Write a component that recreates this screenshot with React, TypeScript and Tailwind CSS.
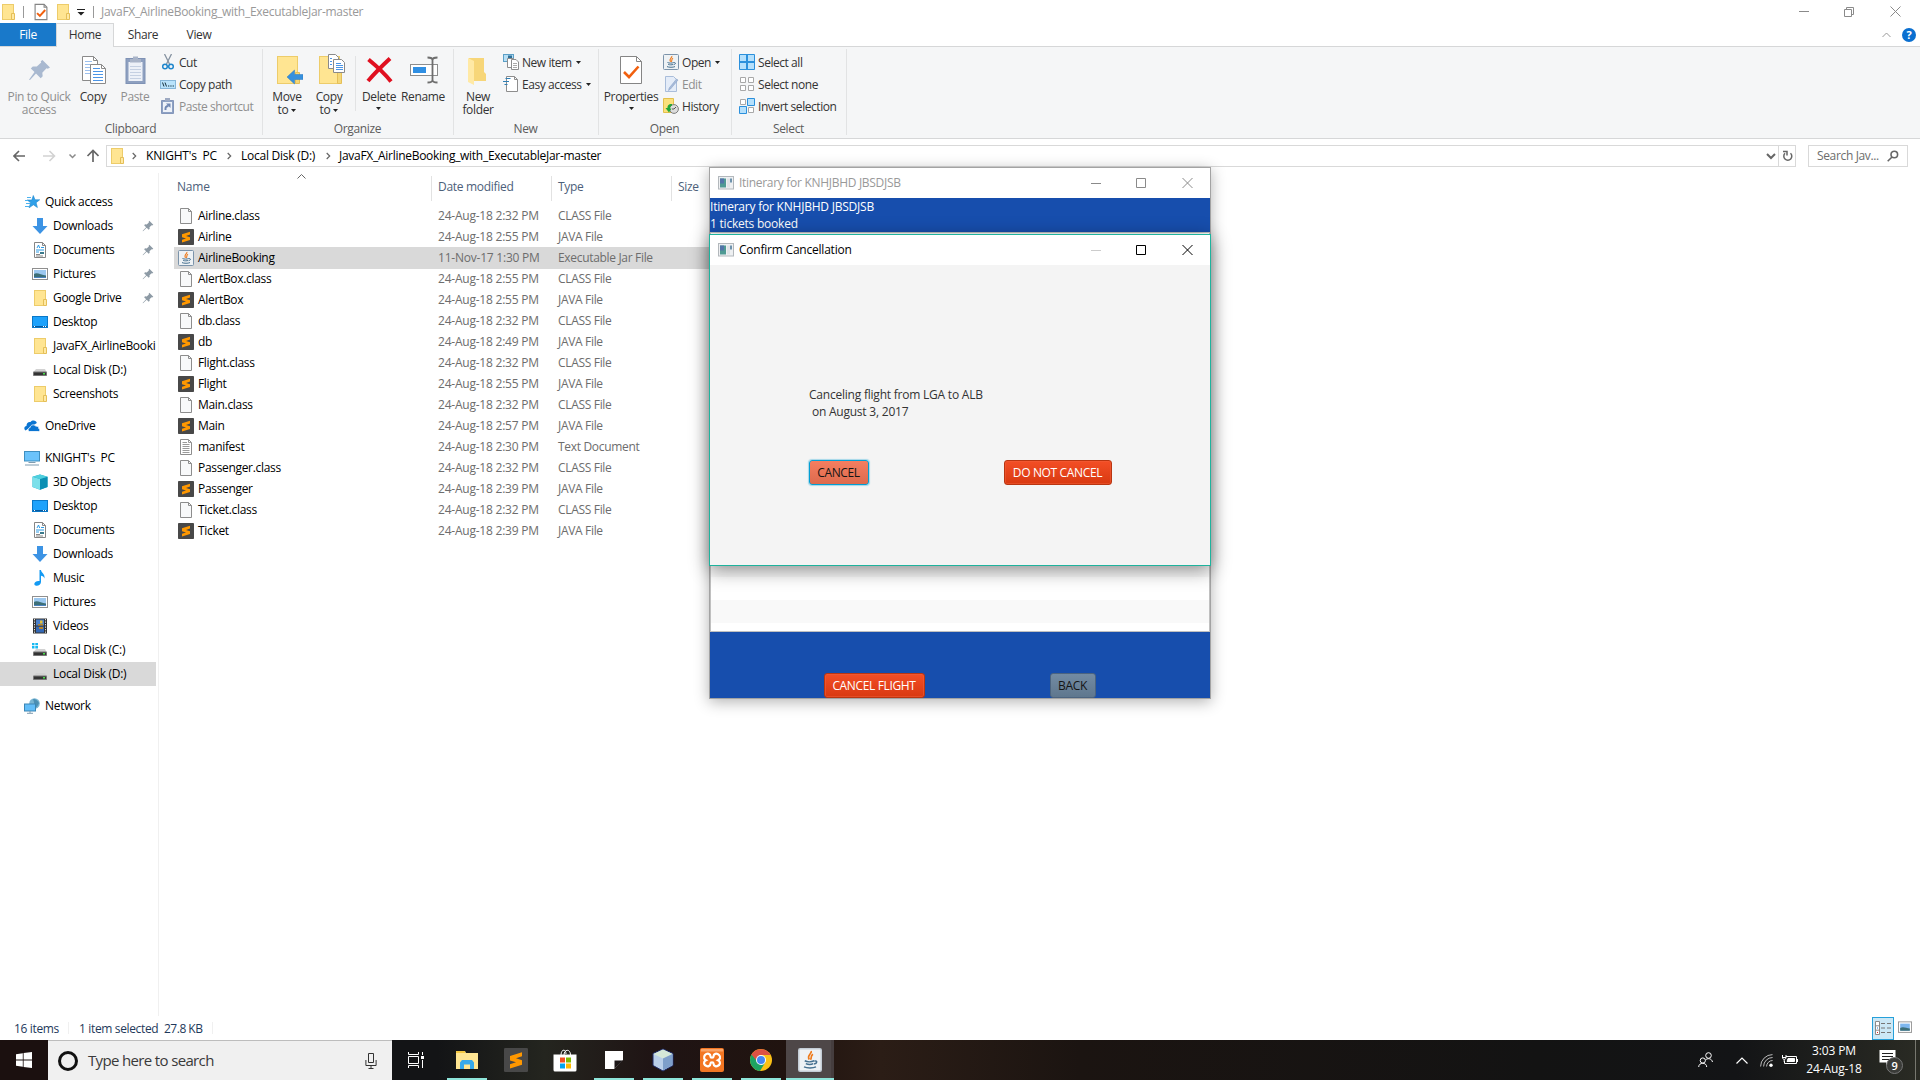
import React from "react";

type IconProps = { className?: string };

const Svg = ({ size = 16, box, className = "", children }: { size?: number; box?: string; className?: string; children: React.ReactNode }) => (
  <svg width={size} height={size} viewBox={box ?? `0 0 ${size} ${size}`} className={`shrink-0 ${className}`} fill="none">
    {children}
  </svg>
);

/* ---------- small icons ---------- */
const Folder = ({ className }: IconProps) => (
  <Svg className={className}>
    <rect x="2.5" y=".5" width="11" height="15" fill="#ffe592" stroke="#edcc6a" />
    <path d="M11.5 9.5h3v6h-3z" fill="#ffe9a3" stroke="#e5bf58" />
  </Svg>
);
const BlankFile = () => (
  <Svg>
    <path d="M2.500.5h8l3 3v12h-11z" fill="#f8f9fa" stroke="#8d8d8d" />
    <path d="M10.500.5v3h3" stroke="#8d8d8d" />
  </Svg>
);
const TextFile = () => (
  <Svg>
    <path d="M2.500.5h8l3 3v12h-11z" fill="#fff" stroke="#8d8d8d" />
    <path d="M10.500.5v3h3M4.500 3.500H9M4.500 5.500h7M4.500 7.500h7M4.500 9.500h7M4.500 11.500h7M4.500 13.500h7" stroke="#9a9a9a" />
  </Svg>
);
const SublimeFile = ({ size = 16 }: { size?: number }) => (
  <Svg size={size} box="0 0 16 16">
    <rect width="16" height="16" rx=".8" fill="#484848" />
    <path d="M12 2.800v2.700L8 6.900l4 1.300v2.900l-8 2.500v-2.800l4-1.300-4-1.200V5.300z" fill="#ff9800" />
  </Svg>
);
const JavaFile = ({ size = 16 }: { size?: number }) => (
  <Svg size={size} box="0 0 16 16">
    <rect x=".5" y=".5" width="15" height="15" rx="1" fill="#eef2f5" stroke={size > 16 ? "#c3ccd6" : "#7b93aa"} />
    <path d="M8.800 2c.8 1.800-3.300 2.600-1.300 5.700M10 4.200C8 5.300 9.500 6.300 8.300 7.800" stroke="#ee7a1b" strokeWidth="1.100" />
    <path d="M4.500 8.500c1.500.8 4.500.8 6.300 0M5.200 10.400c1.500.6 3.700.6 5 0M4 12.600c2 .9 6 .9 8 0M11 8.700c2.200-.4 1.800 1.600-.3 2" stroke="#46708f" />
  </Svg>
);
const QuickStar = () => (
  <Svg>
    <path d="M9.300 1.500l1.700 4.300h4.700l-3.600 2.900 1.300 4.800-4-2.700-4.300 3 1.500-5L3.300 6h4.500z" fill="#2f9fe8" stroke="#1b86cf" strokeWidth=".6" />
    <path d="M3 3.500h4M1 6.500h3M2 9.500h4M1 12.500h4" stroke="#4db2ee" />
  </Svg>
);
const DownArrow = () => (
  <Svg>
    <path d="M5 0h6v8h4.500L8 16 .5 8H5z" fill="#3c93e4" />
  </Svg>
);
const DocIcon = () => (
  <Svg>
    <path d="M2.500.5h8l3 3v12h-11z" fill="#fff" stroke="#858585" />
    <path d="M10.500.5v3h3M4 12.500h4M4 14h7" stroke="#888" />
    <path d="M5 6l1.500-3 1.200 3M9 5.500h3M4 8h8M4 10h3" stroke="#2d9be6" />
    <path d="M8 10h4v2H8z" fill="#3a7a8b" />
  </Svg>
);
const PicIcon = () => (
  <Svg>
    <rect x=".5" y="2.500" width="15" height="11" fill="#fff" stroke="#8f8f8f" />
    <rect x="2" y="4" width="12" height="8" fill="#9cc8f0" />
    <path d="M2 8c3-2 7 1 12 1.500V12H2z" fill="#3d6f78" />
    <path d="M2 11h12v1H2z" fill="#4a82c0" />
  </Svg>
);
const DesktopIcon = () => (
  <Svg>
    <rect x=".5" y="2.500" width="15" height="11" fill="#1ea2fb" stroke="#0a78c8" />
    <path d="M1 12.500h14" stroke="#08599d" />
    <path d="M2 12.500h1M11 12.500h1M13 12.500h1" stroke="#fff" />
  </Svg>
);
const DiskIcon = ({ win = false }: { win?: boolean }) => (
  <Svg>
    {win && <path d="M0 1h2.500v2.300H0zM3.300 1H6v2.300H3.300zM0 4h2.500v2.500H0zM3.300 4H6v2.500H3.300z" fill="#18b9f2" />}
    <path d="M4 7h9l1.500 3h-13z" fill="#d2d2d2" />
    <rect x="1" y="9.500" width="14" height="4.500" rx=".8" fill="#777" />
    <rect x="2" y="10.500" width="12" height="2.500" fill="#333" />
    <path d="M11 11.800h2" stroke="#48e048" strokeWidth="1.500" />
  </Svg>
);
const OneDriveIcon = () => (
  <Svg>
    <path d="M1.500 12.500C-.6 11 .3 8.200 2.500 8 2.300 5.500 4.200 3.500 6.500 4c2-2.700 6-1.500 6.300 1" fill="#0a74d1" />
    <path d="M5.500 13.500c-2-.5-1.800-3.600.5-3.800.3-2.800 4.200-4 5.700-1.500 2-.6 3.300.8 3 2.300 1.800.4 1.600 3-.2 3z" fill="#0a74d1" stroke="#fff" strokeWidth=".8" />
  </Svg>
);
const PcIcon = () => (
  <Svg>
    <rect x=".5" y="1.500" width="15" height="9.500" fill="#6bc3fb" stroke="#3f8fc0" />
    <path d="M4.500 12.500h7M1 15h14" stroke="#7f9cb0" />
  </Svg>
);
const CubeIcon = () => (
  <Svg>
    <path d="M8 .5l7.500 2.300V13L8 15.700.5 13V2.800z" fill="#1fa9c7" />
    <path d="M8 5l7.500-2.200V13L8 15.700z" fill="#0b8fb3" />
    <path d="M.5 2.800L8 5v10.700L.5 13z" fill="#7be0ea" />
    <path d="M8 .5l7.500 2.300L8 5 .5 2.800z" fill="#4fd0de" />
  </Svg>
);
const MusicIcon = () => (
  <Svg>
    <path d="M7.500 0h1.500c.3 3 4.500 4 3.300 8.500C12 6.500 10.500 6 9 5.700V12c0 3-3.500 4.500-5.500 3.600C1 14.500 2.500 10.500 7.500 11z" fill="#139af3" />
  </Svg>
);
const VideoIcon = () => (
  <Svg>
    <rect x="1" y=".5" width="14" height="15" fill="#333" />
    <path d="M2.500 1v14M13.500 1v14" stroke="#ddd" strokeDasharray="1.300 1.200" />
    <rect x="4" y="1.500" width="8" height="6" fill="#4a7fc8" />
    <rect x="4" y="8.500" width="8" height="6" fill="#3468b5" />
    <path d="M6 6h5v1.500H6zM7 9h4v2H7z" fill="#b8862b" />
    <path d="M8 2.500h2.500v3H8z" fill="#e5c13a" />
  </Svg>
);
const NetworkIcon = () => (
  <Svg>
    <circle cx="10.500" cy="5.500" r="5.300" fill="#79b5d3" />
    <path d="M9 1c3 0 5 2 6 4-1 3-3 5-5 5 1-3 0-6-1-9z" fill="#4b8fb3" />
    <rect x=".5" y="6" width="11" height="7" fill="#62bdf8" stroke="#3a86b5" />
    <path d="M3 15.300h6M6 13v2" stroke="#7f9cb0" />
  </Svg>
);
const PinSmall = () => (
  <svg width="12" height="12" viewBox="0 0 12 12" className="shrink-0" fill="#8d9aa5">
    <path d="M7.300.8l4 4-1.200.7-.5-.3L7.500 7.300l.2 1.500-1 .9-2-2L1 11.300.6 11l3.500-3.700-2-2 1-1 1.600.2L6.900 2.400l-.3-.5z" />
  </svg>
);
const AppIcon = () => (
  <svg width="16" height="14" viewBox="0 0 16 14" className="shrink-0">
    <rect x=".5" y=".5" width="15" height="12.500" fill="#eef0f2" stroke="#b3b8bc" />
    <rect x="2" y="2.500" width="6" height="9" fill="#4f9a93" />
    <rect x="2" y="2.500" width="4" height="5" fill="#5274a8" />
    <rect x="9" y="2.500" width="3" height="9" fill="#e0e3e6" />
    <rect x="12" y="2.500" width="2" height="4" fill="#6f93ad" />
  </svg>
);

/* ---------- ribbon small icons ---------- */
const CutIcon = () => (
  <Svg>
    <path d="M4.500 0l5 10M11.500 0l-5 10" stroke="#8592a0" strokeWidth="1.300" />
    <circle cx="5" cy="12.500" r="2.300" stroke="#1f87cc" strokeWidth="1.500" />
    <circle cx="11" cy="12.500" r="2.300" stroke="#1f87cc" strokeWidth="1.500" />
  </Svg>
);
const CopyPathIcon = () => (
  <Svg>
    <rect x=".5" y="4.500" width="15" height="8" fill="#b9e3fb" stroke="#86b6d8" />
    <path d="M2.500 6.500l1.500 4M5 6.500l1.500 4" stroke="#16323f" />
    <path d="M8 10h1.300M10.300 10h1.300M12.600 10h1.300" stroke="#16323f" strokeWidth="1.200" />
  </Svg>
);
const PasteShortcutIcon = () => (
  <Svg>
    <path d="M1.500 2.500h12v13h-12z" fill="#8ea2c4" stroke="#8496ba" />
    <rect x="5" y="0" width="5" height="3" fill="#9eaac2" />
    <rect x="3" y="4" width="9" height="10" fill="#eef2f9" />
    <path d="M5.500 12c-.3-3 .7-4 3-4" stroke="#7188b3" strokeWidth="2" />
    <path d="M6 5.500h4.500V10z" fill="#7188b3" />
  </Svg>
);
const NewItemIcon = () => (
  <Svg>
    <rect x=".5" y=".5" width="10" height="7" fill="#b7dff5" stroke="#5b9fc6" />
    <rect x="5" y="1.500" width="4" height="3" fill="#2d6f98" />
    <path d="M4.500 4.500h6v9h-6z" fill="#fff" stroke="#8d8d8d" />
    <path d="M8.500 5.500h4.500l2.500 2.500v7.500h-7z" fill="#fff" stroke="#8d8d8d" />
    <path d="M10 9.500h4M10 11.500h4M10 13.500h4" stroke="#aaa" />
  </Svg>
);
const EasyAccessIcon = () => (
  <Svg>
    <path d="M3.500.5h8l3 3v12h-11z" fill="#fff" stroke="#8d8d8d" />
    <path d="M11.500.5v3h3" stroke="#8d8d8d" />
    <path d="M2.500 2.500h5M0 5.500h6M1.500 8.500h3" stroke="#2f7fb5" strokeWidth="1.200" />
  </Svg>
);
const EditIcon = () => (
  <Svg>
    <path d="M2.500.5h8l3 3v12h-11z" fill="#e4ecf8" stroke="#a9bdda" />
    <path d="M15 4L7.500 13l-2 1.500.7-2.500L13.500 3z" fill="#a8bbd9" stroke="#8ba4ca" strokeWidth=".6" />
  </Svg>
);
const HistoryIcon = () => (
  <Svg>
    <path d="M.5.500h10v14H.5z" fill="#fbe07b" stroke="#e3c04c" />
    <circle cx="11" cy="11" r="4.400" fill="#dcdcdc" stroke="#7d7d7d" />
    <path d="M11 11l2-2M11 11h-2" stroke="#555" />
    <path d="M9 6C5 6 4.500 8 4.500 10H2.500L6 14.500 8.500 10.500H7c0-1.500.5-2.500 2-3z" fill="#23a638" />
  </Svg>
);
const SelectAllIcon = () => (
  <Svg>
    <path d="M.5.5h7v7h-7zM8.500.5h7v7h-7zM.5 8.500h7v7h-7zM8.500 8.500h7v7h-7z" fill="#b5e0fc" stroke="#2b90dc" />
    <path d="M8 0v16M0 8h16" stroke="#2b90dc" strokeWidth="2" />
  </Svg>
);
const SelectNoneIcon = () => (
  <Svg>
    <path d="M1.500 1.500h5v5h-5zM9.500 1.500h5v5h-5zM1.500 9.500h5v5h-5zM9.500 9.500h5v5h-5z" fill="#fff" stroke="#a8a8a8" />
  </Svg>
);
const InvertIcon = () => (
  <Svg>
    <path d="M1.500 1.500h5v5h-5zM9.500 9.500h5v5h-5z" fill="#fff" stroke="#a8a8a8" />
    <path d="M8.500.5h7v7h-7zM.5 8.500h7v7h-7z" fill="#b5e0fc" stroke="#2b90dc" />
  </Svg>
);

/* ---------- ribbon large icons ---------- */
const BigPin = () => (
  <Svg size={32}>
    <path d="M19.500 6l7.500 7.500-2.200 1.200-1.300-.5-4.200 4.500.4 3.600-2 2-4.700-4.700L7 26l-1-.3 5.500-7.600-3.700-3.700 2-2 4 .2 4.400-4-.5-1.400z" fill="#a9b9d0" />
  </Svg>
);
const BigCopy = () => (
  <Svg size={32}>
    <path d="M5.500 2.500h11l4 4v20h-15z" fill="#fff" stroke="#8a8a8a" />
    <path d="M16.500 2.500v4h4" stroke="#8a8a8a" />
    <path d="M8 7.500h7M8 10.500h9M8 13.500h9M8 16.500h9M8 19.500h9" stroke="#9cc0ee" />
    <path d="M13.500 10.500h11l4 4v15h-15z" fill="#fff" stroke="#8a8a8a" />
    <path d="M24.500 10.500v4h4" stroke="#8a8a8a" />
    <path d="M16 14.500h7M16 17.500h10M16 20.500h10M16 23.500h10M16 26.500h10" stroke="#4b95e6" />
  </Svg>
);
const BigPaste = () => (
  <Svg size={32}>
    <rect x="7" y="4.500" width="19" height="25" fill="#8ea0c0" stroke="#7f92b5" />
    <rect x="9.500" y="8" width="14" height="19" fill="#edf1f8" />
    <path d="M11 5h11v3.500H11zM14 2.500h5v3h-5z" fill="#a9b4c8" />
    <path d="M11 12.500h11M11 15.500h11M11 18.500h11M11 21.500h11M11 24.500h11" stroke="#c5d0e2" />
  </Svg>
);
const BigMove = () => (
  <Svg size={32}>
    <rect x="6.500" y="2.500" width="20" height="27" fill="#ffe592" stroke="#edcc6a" />
    <path d="M24.500 18.500h4v11h-4z" fill="#f5d878" stroke="#e5bf58" />
    <path d="M16 23l7.500-7v4.500H32v5h-8.500V30z" fill="#3690dd" stroke="#2b79c0" strokeWidth=".5" />
  </Svg>
);
const BigCopyTo = () => (
  <Svg size={32}>
    <rect x="6.500" y="2.500" width="20" height="27" fill="#ffe592" stroke="#edcc6a" />
    <path d="M24.500 18.500h4v11h-4z" fill="#f5d878" stroke="#e5bf58" />
    <path d="M15.500.5h7l3 3v11h-10z" fill="#fff" stroke="#8a8a8a" />
    <path d="M20.500 5.500h8l3 3v10h-11z" fill="#fff" stroke="#8a8a8a" />
    <path d="M23 9.500h5M23 11.500h7M23 13.500h7M23 15.500h7M17 4.500h2M17 7.500h2M17 10.500h2" stroke="#4b95e6" />
  </Svg>
);
const BigDelete = () => (
  <Svg size={32}>
    <path d="M5.500 5.500C11 10 22 20 28 27.500M27 4.500C20 11 11 20 5 27" stroke="#e01020" strokeWidth="4" />
  </Svg>
);
const BigRename = () => (
  <Svg size={32}>
    <rect x="3.500" y="10.500" width="27" height="11" fill="#fff" stroke="#8d8d8d" />
    <rect x="6" y="13" width="13" height="6" fill="#2f8fe3" />
    <path d="M25.500 5v23M20.500 3.500c2.500 0 5 .5 5 2.500 0-2 2.500-2.500 5-2.500M20.500 28.500c2.500 0 5-.5 5-2.500 0 2 2.500 2.500 5 2.500" stroke="#6e6e6e" strokeWidth="1.800" />
  </Svg>
);
const BigNewFolder = () => (
  <Svg size={32}>
    <path d="M7 4h15v14l2 2v7H7z" fill="#f7d679" />
    <path d="M6 4l6 3v24l-6-3z" fill="#ffe9a5" />
  </Svg>
);
const CheckDoc = ({ size = 32 }: { size?: number }) => (
  <Svg size={size} box="0 0 32 32">
    <path d="M5.500 2.500h16l5 5v22h-21z" fill="#fff" stroke="#858585" strokeWidth={size < 20 ? 2 : 1} />
    <path d="M21.500 2.500v5h5" stroke="#858585" strokeWidth={size < 20 ? 2 : 1} />
    <path d="M9 18l5 5L23.500 12.500" stroke="#f1600f" strokeWidth={size < 20 ? 3.500 : 2.600} />
  </Svg>
);

const Caret = () => (
  <svg width="5" height="3" viewBox="0 0 5 3" className="inline-block shrink-0 align-middle">
    <path d="M0 0h5L2.500 3z" fill="#222" />
  </svg>
);

/* ---------- ribbon ---------- */
const Big = ({ icon, lines, w, caret, dim }: { icon: React.ReactNode; lines: string[]; w: string; caret?: "inline" | "below"; dim?: boolean }) => (
  <div className={`flex flex-col items-center pt-[7px] ${w} ${dim ? "text-[#8f8f8f]" : "text-[#333]"}`}>
    {icon}
    <div className="mt-1 text-center leading-[13px] whitespace-nowrap">
      {lines.map((l, i) => (
        <div key={l}>
          {l}
          {caret === "inline" && i === lines.length - 1 && <span className="ml-[3px]"><Caret /></span>}
        </div>
      ))}
      {caret === "below" && <div className="-mt-[2px]"><Caret /></div>}
    </div>
  </div>
);
const Small = ({ icon, label, caret, dim }: { icon: React.ReactNode; label: string; caret?: boolean; dim?: boolean }) => (
  <div className={`flex h-[22px] items-center gap-[3px] whitespace-nowrap tracking-[-0.45px] ${dim ? "text-[#8f8f8f]" : "text-[#333]"}`}>
    {icon}
    <span className="pt-px">{label}</span>
    {caret && <span className="ml-px flex"><Caret /></span>}
  </div>
);
const Group = ({ label, w, children }: { label: string; w: string; children: React.ReactNode }) => (
  <>
    <div className={`flex flex-col ${w}`}>
      <div className="flex h-[73px]">{children}</div>
      <div className="-ml-px pt-px text-center leading-[18px] text-[#5c5c5c]">{label}</div>
    </div>
    <div className="mt-[2px] h-[86px] w-px bg-[#e2e3e4]" />
  </>
);

const Ribbon = () => (
  <div className="flex h-[92px] border-b border-[#d6d7d8] bg-[#f5f6f7]">
    <Group label="Clipboard" w="w-[262px]">
      <Big w="ml-1 w-[70px]" icon={<BigPin />} lines={["Pin to Quick", "access"]} dim />
      <Big w="w-[38px]" icon={<BigCopy />} lines={["Copy"]} />
      <Big w="w-[46px]" icon={<BigPaste />} lines={["Paste"]} dim />
      <div className="ml-[2px] pt-1">
        <Small icon={<CutIcon />} label="Cut" />
        <Small icon={<CopyPathIcon />} label="Copy path" />
        <Small icon={<PasteShortcutIcon />} label="Paste shortcut" dim />
      </div>
    </Group>
    <Group label="Organize" w="w-[190px]">
      <Big w="ml-[3px] w-[42px]" icon={<BigMove />} lines={["Move", "to"]} caret="inline" />
      <Big w="w-[42px]" icon={<BigCopyTo />} lines={["Copy", "to"]} caret="inline" />
      <div className="mt-[9px] ml-[5px] h-[55px] w-px bg-[#e2e3e4]" />
      <Big w="w-[46px]" icon={<BigDelete />} lines={["Delete"]} caret="below" />
      <Big w="w-[42px]" icon={<BigRename />} lines={["Rename"]} />
    </Group>
    <Group label="New" w="w-[144px]">
      <Big w="ml-[2px] w-[44px]" icon={<BigNewFolder />} lines={["New", "folder"]} />
      <div className="ml-[3px] pt-1">
        <Small icon={<NewItemIcon />} label="New item" caret />
        <Small icon={<EasyAccessIcon />} label="Easy access" caret />
      </div>
    </Group>
    <Group label="Open" w="w-[132px]">
      <Big w="w-[64px]" icon={<CheckDoc />} lines={["Properties"]} caret="below" />
      <div className="pt-1">
        <Small icon={<JavaFile />} label="Open" caret />
        <Small icon={<EditIcon />} label="Edit" dim />
        <Small icon={<HistoryIcon />} label="History" />
      </div>
    </Group>
    <Group label="Select" w="w-[114px]">
      <div className="ml-[7px] pt-1">
        <Small icon={<SelectAllIcon />} label="Select all" />
        <Small icon={<SelectNoneIcon />} label="Select none" />
        <Small icon={<InvertIcon />} label="Invert selection" />
      </div>
    </Group>
  </div>
);

/* ---------- top bars ---------- */
const TitleBar = () => (
  <div className="flex h-[23px] items-center pt-px">
    <Folder />
    <div className="ml-[7px] h-3 w-px bg-[#999]" />
    <div className="ml-[8px] flex"><CheckDoc size={18} /></div>
    <Folder className="ml-[5px]" />
    <svg width="8" height="7" viewBox="0 0 8 7" className="ml-[6px]">
      <path d="M0 0h8v1H0zM0.500 3h7L4 6.500z" fill="#222" />
    </svg>
    <div className="ml-[8px] h-3 w-px bg-[#999]" />
    <span className="ml-[7px] text-[#999] tracking-[-0.28px]">JavaFX_AirlineBooking_with_ExecutableJar-master</span>
    <svg width="112" height="12" viewBox="0 0 112 12" className="mr-[19px] ml-auto" fill="none" stroke="#8a8a8a">
      <path d="M10 5.500h10M101.500 .5l10 10M111.500.5l-10 10M55.500 3.500h7v7h-7zM57.500 3.500v-2h7v7h-2" />
    </svg>
  </div>
);
const Tabs = () => (
  <div className="flex h-[24px] border-b border-[#d6d7d8]">
    <div className="h-[23px] w-14 bg-[#1979ca] text-center leading-[24px] text-white">File</div>
    <div className="h-[24px] w-[58px] border border-b-0 border-[#d6d7d8] bg-[#f5f6f7] text-center leading-[22px] text-[#333]">Home</div>
    <div className="w-[58px] text-center leading-[24px] text-[#333]">Share</div>
    <div className="w-[54px] text-center leading-[24px] text-[#333]">View</div>
    <div className="mr-1 ml-auto flex items-center gap-[11px]">
      <svg width="9" height="6" viewBox="0 0 9 6" fill="none" stroke="#999"><path d="M.5 5l4-4 4 4" /></svg>
      <div className="h-[14px] w-[14px] rounded-full bg-[#0a6fd0] text-center text-[11px] leading-[14px] font-bold text-white">?</div>
    </div>
  </div>
);
const Chevron = () => (
  <svg width="5" height="8" viewBox="0 0 5 8" fill="none" stroke="#666" strokeWidth="1.200"><path d="M.7 1l3 3-3 3" /></svg>
);
const AddressBar = () => (
  <div className="flex h-[34px] items-center">
    <svg width="86" height="14" viewBox="0 0 86 14" className="ml-[13px]" fill="none">
      <path d="M12 7H1M6 2L1 7l5 5" stroke="#666" strokeWidth="1.600" />
      <path d="M30 7h11M36.500 2l5 5-5 5" stroke="#d2d2d2" strokeWidth="1.600" />
      <path d="M56.500 5.500l3 3 3-3" stroke="#8a8a8a" strokeWidth="1.500" />
      <path d="M80 13V2M74.500 7L80 1.500 85.500 7" stroke="#666" strokeWidth="1.700" />
    </svg>
    <div className="ml-[7px] flex h-[22px] w-[1690px] items-center border border-[#d9d9d9] text-black">
      <Folder className="ml-[2px]" />
      <div className="ml-[7px] flex"><Chevron /></div>
      <span className="ml-[9px] w-[81px] whitespace-pre tracking-[-0.2px]">KNIGHT's  PC</span>
      <Chevron />
      <span className="ml-[9px] w-[85px] tracking-[-0.25px]">Local Disk (D:)</span>
      <Chevron />
      <span className="ml-[8px] tracking-[-0.28px]">JavaFX_AirlineBooking_with_ExecutableJar-master</span>
      <svg width="10" height="7" viewBox="0 0 10 7" className="mr-[2px] ml-auto" fill="none" stroke="#666" strokeWidth="2"><path d="M1 1l4 4 4-4" /></svg>
      <div className="flex h-full w-[17px] items-center justify-center border-l border-[#d9d9d9]">
        <svg width="11" height="12" viewBox="0 0 11 12" fill="none" stroke="#666" strokeWidth="1.500">
          <path d="M8.500 3.200A4 4 0 1 1 3 3.300M1 1.500h4v4" />
        </svg>
      </div>
    </div>
    <div className="ml-3 flex h-[22px] w-[100px] items-center border border-[#d9d9d9] pl-2 text-[#6d6d6d]">
      Search Jav...
      <svg width="12" height="12" viewBox="0 0 12 12" className="mr-2 ml-auto" fill="none" stroke="#666" strokeWidth="1.600">
        <circle cx="7.300" cy="4.500" r="3.300" /><path d="M5 7L.7 11.300" />
      </svg>
    </div>
  </div>
);

/* ---------- navigation ---------- */
const navItems: { icon: React.ReactNode; label: string; root?: boolean; pin?: boolean; sel?: boolean; gap?: boolean }[] = [
  { icon: <QuickStar />, label: "Quick access", root: true },
  { icon: <DownArrow />, label: "Downloads", pin: true },
  { icon: <DocIcon />, label: "Documents", pin: true },
  { icon: <PicIcon />, label: "Pictures", pin: true },
  { icon: <Folder />, label: "Google Drive", pin: true },
  { icon: <DesktopIcon />, label: "Desktop" },
  { icon: <Folder />, label: "JavaFX_AirlineBooki" },
  { icon: <DiskIcon />, label: "Local Disk (D:)" },
  { icon: <Folder />, label: "Screenshots" },
  { icon: <OneDriveIcon />, label: "OneDrive", root: true, gap: true },
  { icon: <PcIcon />, label: "KNIGHT's  PC", root: true, gap: true },
  { icon: <CubeIcon />, label: "3D Objects" },
  { icon: <DesktopIcon />, label: "Desktop" },
  { icon: <DocIcon />, label: "Documents" },
  { icon: <DownArrow />, label: "Downloads" },
  { icon: <MusicIcon />, label: "Music" },
  { icon: <PicIcon />, label: "Pictures" },
  { icon: <VideoIcon />, label: "Videos" },
  { icon: <DiskIcon win />, label: "Local Disk (C:)" },
  { icon: <DiskIcon />, label: "Local Disk (D:)", sel: true },
  { icon: <NetworkIcon />, label: "Network", root: true, gap: true },
];
const Nav = () => (
  <div className="mr-[2px] w-[156px] pt-[17px]">
    {navItems.map((n, i) => (
      <div
        key={i}
        className={`flex h-6 items-center overflow-hidden whitespace-pre text-black tracking-[-0.3px] ${n.root ? "pl-6" : "pl-8"} ${n.gap ? "mt-2" : ""} ${n.sel ? "bg-[#d9d9d9]" : ""}`}
      >
        {n.icon}
        <span className="ml-[5px]">{n.label}</span>
        {n.pin && <div className="mr-[2px] ml-auto flex"><PinSmall /></div>}
      </div>
    ))}
  </div>
);

/* ---------- file list ---------- */
const files: [string, string, "CLASS File" | "JAVA File" | "Executable Jar File" | "Text Document"][] = [
  ["Airline.class", "24-Aug-18 2:32 PM", "CLASS File"],
  ["Airline", "24-Aug-18 2:55 PM", "JAVA File"],
  ["AirlineBooking", "11-Nov-17 1:30 PM", "Executable Jar File"],
  ["AlertBox.class", "24-Aug-18 2:55 PM", "CLASS File"],
  ["AlertBox", "24-Aug-18 2:55 PM", "JAVA File"],
  ["db.class", "24-Aug-18 2:32 PM", "CLASS File"],
  ["db", "24-Aug-18 2:49 PM", "JAVA File"],
  ["Flight.class", "24-Aug-18 2:32 PM", "CLASS File"],
  ["Flight", "24-Aug-18 2:55 PM", "JAVA File"],
  ["Main.class", "24-Aug-18 2:32 PM", "CLASS File"],
  ["Main", "24-Aug-18 2:57 PM", "JAVA File"],
  ["manifest", "24-Aug-18 2:30 PM", "Text Document"],
  ["Passenger.class", "24-Aug-18 2:32 PM", "CLASS File"],
  ["Passenger", "24-Aug-18 2:39 PM", "JAVA File"],
  ["Ticket.class", "24-Aug-18 2:32 PM", "CLASS File"],
  ["Ticket", "24-Aug-18 2:39 PM", "JAVA File"],
];
const typeIcon = {
  "CLASS File": <BlankFile />,
  "JAVA File": <SublimeFile />,
  "Executable Jar File": <JavaFile />,
  "Text Document": <TextFile />,
};
const FileList = () => (
  <div className="flex-1 pt-px pl-[15px]">
    <div className="flex justify-start pl-[123px]">
      <svg width="9" height="5" viewBox="0 0 9 5" fill="none" stroke="#666"><path d="M.5 4.500l4-4 4 4" /></svg>
    </div>
    <div className="mb-1 -mt-[3px] flex h-[25px] text-[#4c607a] leading-[22px]">
      <div className="w-[258px] border-r border-[#e2e2e2] pl-[3px] tracking-[-0.2px]">Name</div>
      <div className="w-[120px] border-r border-[#e2e2e2] pl-[6px] tracking-[-0.3px]">Date modified</div>
      <div className="w-[120px] border-r border-[#e2e2e2] pl-[6px]">Type</div>
      <div className="pl-[6px]">Size</div>
    </div>
    <div>
      {files.map(([name, date, type]) => (
        <div
          key={name}
          className={`-mb-px flex h-[22px] w-[726px] items-center pl-1 text-[#6d6d6d] ${type === "Executable Jar File" ? "bg-[#d9d9d9]" : ""}`}
        >
          {typeIcon[type]}
          <span className="ml-1 w-[240px] text-black tracking-[-0.32px]">{name}</span>
          <span className="w-[120px] tracking-[-0.22px]">{date}</span>
          <span className="tracking-[-0.32px]">{type}</span>
        </div>
      ))}
    </div>
  </div>
);

const StatusBar = () => (
  <div className="flex h-6 items-center text-[#1e395b]">
    <span className="ml-[14px] w-[54px] pt-[2px]">16 items</span>
    <div className="h-3 w-px bg-[#f0f0f0]" />
    <span className="ml-[10px] w-[85px] pt-[2px]">1 item selected</span>
    <span className="w-[48px] pt-[2px] tracking-[-0.5px]">27.8 KB</span>
    <div className="h-3 w-px bg-[#f0f0f0]" />
    <div className="mr-[8px] ml-auto flex items-center gap-1">
      <div className="flex h-[23px] w-[22px] items-center justify-center border border-[#26a0da] bg-[#cbe8f6]">
        <svg width="16" height="14" viewBox="0 0 16 14" fill="none">
          <path d="M.5.5h4v13h-4zM.5 4.800h4M.5 9.200h4" fill="#fff" stroke="#8a8a8a" />
          <path d="M6 2.500h4M12 2.500h4M6 7h4M12 7h4M6 11.500h4M12 11.500h4" stroke="#777" />
          <path d="M2 7h1" stroke="#27c" /><path d="M2 11.500h1" stroke="#d22" />
        </svg>
      </div>
      <Svg size={14} box="0 0 16 16">
        <rect x=".5" y="1" width="15" height="12" fill="#fff" stroke="#8f8f8f" />
        <rect x="2.500" y="3" width="11" height="8" fill="#7db6ee" />
        <path d="M2.500 8c3-2 7 0 11 .5V11h-11z" fill="#3d6f78" />
      </Svg>
    </div>
  </div>
);

/* ---------- floating windows ---------- */
const WindowTitle = ({ title, active }: { title: string; active?: boolean }) => (
  <div className="flex h-[30px] items-center bg-white pl-[8px]">
    <AppIcon />
    <span className={`ml-[5px] ${active ? "text-black tracking-[-0.22px]" : "text-[#999] tracking-[-0.3px]"}`}>{title}</span>
    <svg width="102" height="12" viewBox="0 0 102 12" className="mr-[17px] ml-auto" fill="none" stroke={active ? "#000" : "#8a8a8a"}>
      <path d="M0 6.500h10" stroke={active ? "#ccc" : "#8a8a8a"} />
      <path d="M45.500 1.500h9v9h-9zM91.500 1l10 10M101.500 1l-10 10" />
    </svg>
  </div>
);
const redBtn = "flex items-center justify-center rounded-[3px] border border-[#b93511] bg-linear-to-b from-[#f34e25] to-[#d93910] pr-px text-white inset-shadow-[0_0_0_1px_#f2603a80]";

const ItineraryWindow = () => (
  <div className="absolute top-[167px] left-[709px] flex h-[532px] w-[502px] flex-col border border-[#a3a3a3] bg-white shadow-[0_3px_14px_rgba(0,0,0,0.3)]">
    <WindowTitle title="Itinerary for KNHJBHD JBSDJSB" />
    <div className="h-[34px] bg-[#174ead] leading-[17px] text-white tracking-[-0.22px]">
      <div>Itinerary for KNHJBHD JBSDJSB</div>
      <div>1 tickets booked</div>
    </div>
    <div className="flex flex-1 flex-col justify-end border border-[#c0c0c0] bg-white">
      <div className="h-[23px] bg-[#f9f9f9]" />
      <div className="h-[23px]" />
      <div className="h-[23px] bg-[#f9f9f9]" />
      <div className="h-[8px]" />
    </div>
    <div className="flex h-[66px] items-end bg-[#174ead]">
      <div className={`${redBtn} ml-[114px] h-[25px] w-[101px]`}>CANCEL FLIGHT</div>
      <div className="ml-[125px] flex h-[25px] w-[46px] items-center justify-center rounded-[3px] border border-[#4c6480] bg-linear-to-b from-[#738ba3] to-[#5f778e] pr-px text-[#151515]">BACK</div>
    </div>
  </div>
);
const ConfirmDialog = () => (
  <div className="absolute top-[234px] left-[709px] h-[332px] w-[502px] border border-[#1eb39d] bg-[#f4f4f4] shadow-[0_4px_18px_rgba(0,0,0,0.45)]">
    <WindowTitle title="Confirm Cancellation" active />
    <div className="pt-[121px] pl-[99px] leading-[17px] whitespace-pre text-[#333] tracking-[-0.22px]">
      <div>Canceling flight from LGA to ALB</div>
      <div> on August 3, 2017</div>
    </div>
    <div className="mt-[40px] flex pl-[99px]">
      <div className="flex h-[25px] w-[60px] items-center justify-center rounded-[3px] border border-[#039ed3] bg-linear-to-b from-[#f57e60] to-[#dd6a4d] pr-px text-[#151515] shadow-[0_0_1px_1px_#039ed355]">CANCEL</div>
      <div className={`${redBtn} ml-[135px] h-[25px] w-[108px]`}>DO NOT CANCEL</div>
    </div>
  </div>
);

/* ---------- taskbar ---------- */
const ExplorerTask = () => (
  <svg width="24" height="24" viewBox="0 0 24 24">
    <path d="M1 3h9l1 2h12v16H1z" fill="#ffe592" />
    <path d="M1 3h9v2H1z" fill="#f5c842" />
    <path d="M5 21v-6.500L7 12h10l2 2.500V21h-4v-4.500H9V21z" fill="#38a9ea" />
  </svg>
);
const StoreTask = () => (
  <svg width="24" height="24" viewBox="0 0 24 24">
    <path d="M8 7c0-6 5-6.500 5-1M11 7c0-6 6.500-6.500 6.500 0" stroke="#fff" fill="none" />
    <path d="M.5 6.500h23V22a1.500 1.500 0 0 1-1.500 1.500H2A1.500 1.500 0 0 1 .5 22z" fill="#fff" />
    <path d="M7 9.500h5v5H7z" fill="#f25022" /><path d="M13 9.500h5v5h-5z" fill="#7fba00" />
    <path d="M7 15.500h5v5H7z" fill="#00a4ef" /><path d="M13 15.500h5v5h-5z" fill="#ffb900" />
  </svg>
);
const StickyTask = () => (
  <svg width="24" height="24" viewBox="0 0 24 24">
    <path d="M3 3h18v9l-9 9H3z" fill="#fff" /><path d="M12.500 20.500v-8H21z" fill="#1c1718" />
  </svg>
);
const NetbeansTask = () => (
  <svg width="24" height="24" viewBox="0 0 24 24">
    <path d="M12 1l10 4.500v12L12 23 2 17.500v-12z" fill="#b9cfe9" stroke="#1e2a66" />
    <path d="M12 1.500l9.500 4.500L12 10.500 2.500 6z" fill="#d5e8d8" />
    <path d="M12 10.500L21.500 6v11.300L12 22.300z" fill="#7e9fca" />
  </svg>
);
const XamppTask = () => (
  <svg width="24" height="24" viewBox="0 0 24 24">
    <rect width="24" height="24" rx="2" fill="#f37623" />
    <path d="M1 1h22v2.500H1z" fill="#f9a468" />
    <path d="M5 7c2.500-2.500 5.500-1 5.500 1.500 0 1.500 3 1.500 3 0C13.500 6 16.500 4.500 19 7s.5 4.500-1 5.200c1.500.8 3 2.800 1 5-2.500 2-5.500 1-5.500-1.700 0-1.500-3-1.500-3 0 0 2.700-3 3.700-5.500 1.700-2-2.200-.5-4.200 1-5C4.500 11.500 3 9.500 5 7z" stroke="#fff" strokeWidth="2.200" fill="none" />
  </svg>
);
const ChromeTask = () => (
  <svg width="24" height="24" viewBox="0 0 24 24">
    <circle cx="12" cy="12" r="11" fill="#fbc116" />
    <path d="M12 12L2.500 6.500A11 11 0 0 0 11 23l5.500-9z" fill="#1da462" />
    <path d="M12 12H7L2.500 6.500A11 11 0 0 1 21.600 7H12z" fill="#dd5144" />
    <circle cx="12" cy="12" r="5" fill="#fff" /><circle cx="12" cy="12" r="4" fill="#4587f3" />
  </svg>
);
const tasks: { icon: React.ReactNode; run?: boolean; active?: boolean }[] = [
  { icon: <ExplorerTask />, run: true },
  { icon: <SublimeFile size={24} /> },
  { icon: <StoreTask /> },
  { icon: <StickyTask />, run: true },
  { icon: <NetbeansTask />, run: true },
  { icon: <XamppTask />, run: true },
  { icon: <ChromeTask />, run: true },
  { icon: <JavaFile size={24} />, run: true, active: true },
];
const Taskbar = () => (
  <div className="flex h-10 bg-[#1b100f] text-white">
    <div className="flex w-12 items-center justify-center">
      <svg width="16" height="16" viewBox="0 0 16 16" fill="#fff">
        <path d="M0 2.200L6.800 1.200v6.400H0zM7.600 1.100L16 0v7.600H7.600zM0 8.400h6.800v6.400L0 13.800zM7.600 8.400H16V16l-8.400-1.100z" />
      </svg>
    </div>
    <div className="flex w-[344px] items-center border-t border-[#bdbdbd] bg-[#f0f0f0] pl-[10px] text-[15px] text-[#3a3a3a]">
      <div className="h-5 w-5 rounded-full border-[3px] border-[#111]" />
      <span className="ml-[10px] tracking-[-0.65px]">Type here to search</span>
      <svg width="12" height="18" viewBox="0 0 12 18" className="mr-[15px] ml-auto" fill="none" stroke="#333">
        <path d="M3.500 1.500h5v9h-5zM.9 8v5.500h10.200V8M6 13.500v3M3.500 16.500h5" />
      </svg>
    </div>
    <div className="flex flex-1 bg-[linear-gradient(90deg,#131416_0%,#131416_3%,#24251f_10%,#1f1414_17%,#20130f_26%,#2b1d16_32%,#1b1411_45%,#131313_75%,#131416_88%,#2a2b24_100%)]">
      <div className="flex w-[51px] items-center pl-4">
        <svg width="17" height="16" viewBox="0 0 17 16" fill="none" stroke="#fff">
          <path d="M.5 0v2.500h10V0M.5 16v-2.500h10V16M.5 4.500h10v7H.5zM14.500 0v3M14.500 8v8" /><path d="M13 4h3v3h-3z" fill="#fff" stroke="none" />
        </svg>
      </div>
      {tasks.map((t, i) => (
        <div key={i} className={`mr-px flex w-12 flex-col items-center ${t.active ? "border-r-[3px] border-[#453d3e] bg-[#4e4748]" : ""}`}>
          <div className={`flex h-[38px] items-center pt-[2px] ${t.active ? "pl-[3px]" : ""}`}>{t.icon}</div>
          {t.run && <div className={`h-[2px] bg-[#8ee5da] ${t.active ? "-mr-[3px] w-12" : "w-10"}`} />}
        </div>
      ))}
      <div className="ml-auto flex items-center">
        <svg width="16" height="16" viewBox="0 0 16 16" fill="none" stroke="#fff">
          <circle cx="10.500" cy="3.500" r="2.800" /><circle cx="4.800" cy="8.500" r="2.600" /><path d="M7.500 8c2-2 6-2 7 2M.7 15c0-5 8-5 8 0" />
        </svg>
        <svg width="12" height="7" viewBox="0 0 12 7" className="ml-[22px]" fill="none" stroke="#fff" strokeWidth="1.200"><path d="M.5 6.500L6 1l5.500 5.500" /></svg>
        <svg width="13" height="13" viewBox="0 0 13 13" className="ml-[12px]" fill="none" stroke="#bbb">
          <path d="M.6 12.500A12 12 0 0 1 12.500.6M3.600 12.500a9 9 0 0 1 9-9M6.600 12.500a6 6 0 0 1 6-6" /><circle cx="11" cy="11.300" r="1.700" fill="#fff" stroke="none" />
        </svg>
        <svg width="17" height="12" viewBox="0 0 17 12" className="ml-[8px]" fill="none" stroke="#fff">
          <path d="M5 2.500h10.500v7H3.500V7M1 3.500h4M1.500 1v2.500C1.500 6 5 6 5 3.500V1M3.200 5.500V8" /><path d="M7 4.500h6.500v3H6z" fill="#fff" /><path d="M16 5h1v3h-1z" fill="#fff" stroke="none" />
        </svg>
        <div className="ml-[6px] w-[60px] text-center leading-[18px] whitespace-nowrap tracking-[-0.15px]">
          <div>3:03 PM</div>
          <div>24-Aug-18</div>
        </div>
        <div className="relative ml-[15px] h-6 w-6">
          <svg width="17" height="17" viewBox="0 0 17 17" className="mt-[2px]"><path d="M.5 0h16v12.500H10L7 16v-3.500H.5z" fill="#fff" /><path d="M3 3.500h11M3 6.500h11M3 9.500h7" stroke="#222" /></svg>
          <div className="absolute top-[9px] left-[7px] h-[17px] w-[17px] rounded-full border border-[#777] bg-[#3a3b38] text-center text-[11px] leading-[15px] font-semibold">9</div>
        </div>
        <div className="ml-[12px] h-10 w-px bg-[#77776f]" />
        <div className="w-1" />
      </div>
    </div>
  </div>
);

export default function App() {
  return (
    <div className="relative flex h-[1080px] w-[1920px] flex-col overflow-hidden bg-white font-['Open_Sans',sans-serif] text-[12px] tracking-[-0.35px] text-black">
      <TitleBar />
      <Tabs />
      <Ribbon />
      <AddressBar />
      <div className="flex min-h-0 flex-1">
        <Nav />
        <div className="w-px bg-[#f0f0f0]" />
        <FileList />
      </div>
      <StatusBar />
      <Taskbar />
      <ItineraryWindow />
      <ConfirmDialog />
    </div>
  );
}
